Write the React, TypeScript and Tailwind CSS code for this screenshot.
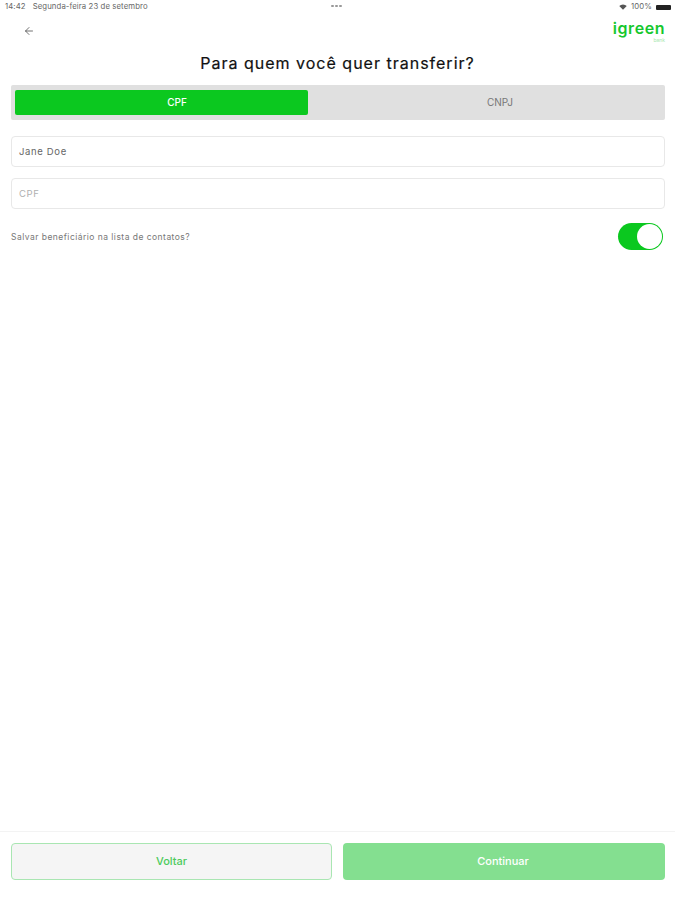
import { ArrowLeft } from 'lucide-react';

function WifiIcon() {
  return (
    <svg viewBox="0 0 16 12" className="h-[6px] w-[8px]" aria-hidden>
      <path d="M8 11.5 0.5 4a10.6 10.6 0 0 1 15 0Z" fill="#555" />
    </svg>
  );
}

function StatusBar() {
  return (
    <div className="relative flex h-[13px] items-center justify-between pl-[5px] pr-[4px] pt-[1px] text-[7.75px] tracking-[0.1px] text-[#666]">
      <div className="flex gap-[7px]">
        <span>14:42</span>
        <span>Segunda-feira 23 de setembro</span>
      </div>
      <div className="absolute left-[331px] top-[5px] flex gap-[1px]">
        <span className="h-[2px] w-[3px] rounded-full bg-[#999]" />
        <span className="h-[2px] w-[3px] rounded-full bg-[#999]" />
        <span className="h-[2px] w-[3px] rounded-full bg-[#999]" />
      </div>
      <div className="flex items-center gap-[4px]">
        <WifiIcon />
        <span>100%</span>
        <span className="h-[5px] w-[15px] rounded-[1px] bg-[#222]" />
      </div>
    </div>
  );
}

function Logo() {
  return (
    <div className="flex flex-col items-end text-[#16c72e]">
      <span className="text-[16px] font-semibold leading-[13px] tracking-[0.55px]">igreen</span>
      <span className="mt-[3px] text-[5px] leading-[5px] text-[#a5e6ae]">bank</span>
    </div>
  );
}

function TextField({ label, muted }: { label: string; muted?: boolean }) {
  return (
    <div
      className={`flex h-[31px] items-center rounded-[4px] border border-[#e8e8e8] px-[7px] pt-[1px] text-[9.5px] tracking-[0.65px] ${
        muted ? 'text-[#b0b0b0]' : 'text-[#666]'
      }`}
    >
      {label}
    </div>
  );
}

export default function App() {
  return (
    <div className="flex h-[900px] w-[675px] flex-col overflow-hidden bg-white font-['Inter',sans-serif]">
      <StatusBar />

      <div className="flex h-[36px] items-start justify-between pl-[23px] pr-[10px] pt-[9px]">
        <ArrowLeft className="mt-[3px] h-[12px] w-[12px] text-[#444]" strokeWidth={1.5} />
        <Logo />
      </div>

      <h1 className="text-center text-[16px] font-normal leading-[28px] tracking-[1px] text-[#111] [-webkit-text-stroke:0.2px_#111]">
        Para quem você quer transferir?
      </h1>

      <div className="ml-[11px] mr-[10px] mt-[8px] flex h-[35px] items-center rounded-[2px] bg-[#e0e0e0] px-[4px]">
        <div className="flex h-[25px] w-[293px] items-center justify-center rounded-[2px] bg-[#0bc81f] pl-[31px] text-[10px] font-medium text-white">
          CPF
        </div>
        <div className="flex flex-1 items-center justify-center pl-[31px] text-[10px] text-[#777]">CNPJ</div>
      </div>

      <div className="ml-[11px] mr-[10px] mt-[16px] flex flex-col gap-[11px]">
        <TextField label="Jane Doe" />
        <TextField label="CPF" muted />
      </div>

      <div className="ml-[11px] mr-[12px] mt-[14px] flex items-center justify-between">
        <span className="pt-[1px] text-[8.5px] tracking-[0.47px] text-[#777]">Salvar beneficiário na lista de contatos?</span>
        <div className="flex h-[27px] w-[45px] items-center justify-end rounded-full bg-[#0bc81f] pr-[1px]">
          <span className="h-[25px] w-[25px] rounded-full bg-white" />
        </div>
      </div>

      <div className="mt-auto flex h-[69px] gap-[11px] border-t border-[#f3f3f3] pl-[11px] pr-[10px] pt-[11px]">
        <button
          type="button"
          className="flex h-[37px] w-[321px] items-center justify-center rounded-[4px] border border-[#a9e6b2] bg-[#f5f5f5] text-[11px] font-medium text-[#4ccb5b]"
        >
          Voltar
        </button>
        <button
          type="button"
          className="flex h-[37px] flex-1 items-center justify-center rounded-[4px] bg-[#84df90] pr-[2px] text-[11px] font-medium text-white"
        >
          Continuar
        </button>
      </div>
    </div>
  );
}
